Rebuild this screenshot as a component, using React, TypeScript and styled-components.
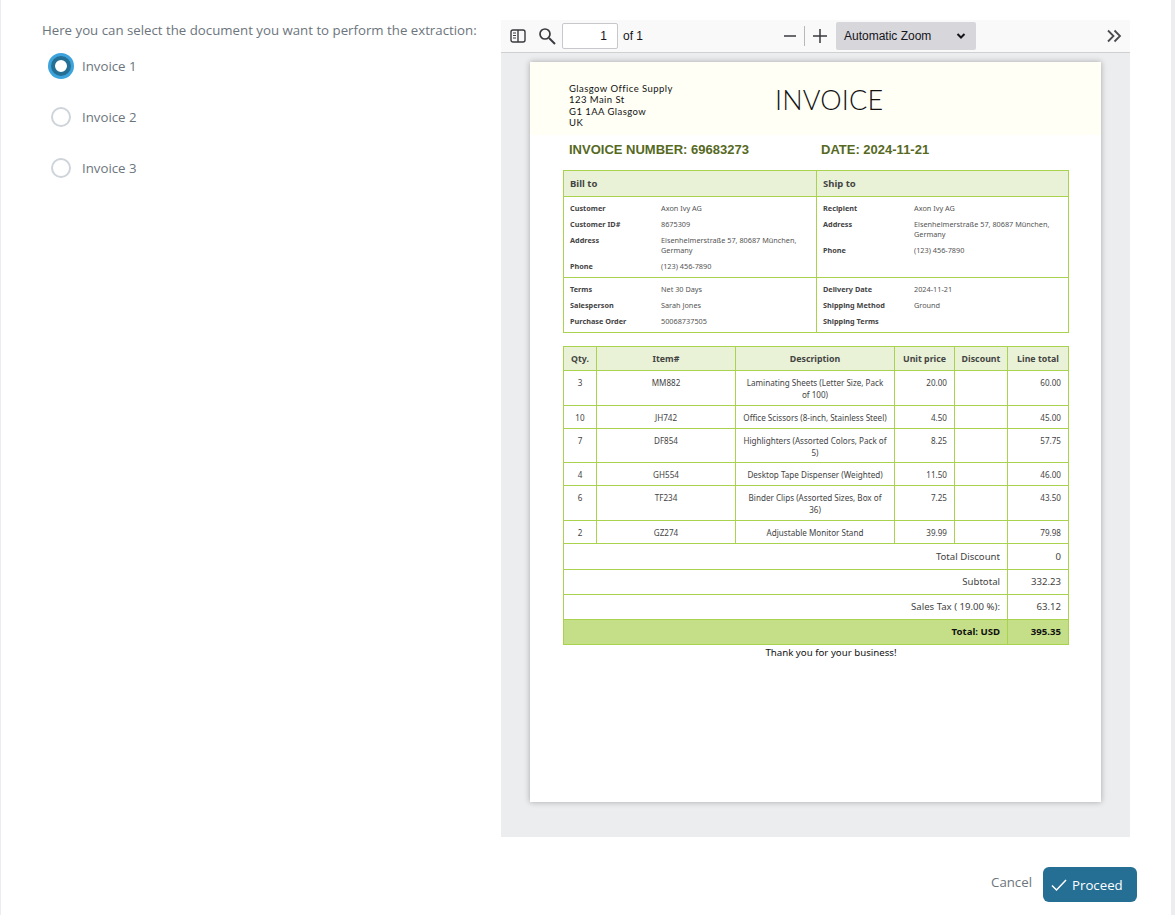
import React from "react";
import styled, { createGlobalStyle } from "styled-components";

const Global = createGlobalStyle`
  html, body { margin: 0; padding: 0; background: #fff; }
  body { font-family: "Open Sans", "Noto Sans", sans-serif; }
`;

const Shell = styled.div`
  width: 1175px;
  height: 915px;
  box-sizing: border-box;
  border-left: 1px solid #edecf0;
  border-right: 4px solid #edecf0;
  padding: 20px 34px 0 41px;
  overflow: hidden;
`;
const Main = styled.div`
  display: flex;
  align-items: flex-start;
`;
const LeftCol = styled.div`
  width: 459px;
  flex: none;
`;
const Prompt = styled.div`
  font-size: 13.25px;
  line-height: 20px;
  color: #6c757d;
  white-space: nowrap;
`;
const RadioList = styled.div`
  display: flex;
  flex-direction: column;
  gap: 25px;
  margin-top: 13px;
  padding-left: 6px;
`;
const RadioRow = styled.div`
  display: flex;
  align-items: center;
  gap: 8px;
  height: 26px;
`;
const RadioSlot = styled.span`
  width: 26px;
  height: 26px;
  display: flex;
  align-items: center;
  justify-content: center;
`;
const RadioOn = styled.span`
  width: 12px;
  height: 12px;
  box-sizing: content-box;
  border-radius: 50%;
  background: #fff;
  border: 4px solid #256f94;
  box-shadow: 0 0 0 3px #3ca3dc;
`;
const RadioOff = styled.span`
  width: 16px;
  height: 16px;
  border-radius: 50%;
  background: #fff;
  border: 2px solid #ced4da;
`;
const RadioLabel = styled.span`
  font-size: 13.25px;
  color: #6c757d;
`;

const Viewer = styled.div`
  width: 629px;
  height: 817px;
  flex: none;
  background: #ecedef;
  display: flex;
  flex-direction: column;
`;
const Toolbar = styled.div`
  height: 32px;
  flex: none;
  box-sizing: content-box;
  background: #f9f9fa;
  border-bottom: 1px solid #d0d0d3;
  display: flex;
  align-items: center;
  font-family: "Liberation Sans", Arial, sans-serif;
  font-size: 12px;
  color: #15141a;
`;
const ToolIcon = styled.svg`
  flex: none;
  display: block;
`;
const PageInput = styled.div`
  width: 56px;
  height: 26px;
  box-sizing: border-box;
  margin-left: 6px;
  background: #fff;
  border: 1px solid #c8c8cc;
  border-radius: 2px;
  text-align: right;
  padding-right: 10px;
  line-height: 24px;
`;
const OfPages = styled.span`
  margin-left: 5px;
  width: 160px;
`;
const Sep = styled.span`
  width: 1px;
  height: 20px;
  background: #b8b8bb;
  margin: 0 7px;
`;
const ZoomSelect = styled.div`
  width: 140px;
  height: 28px;
  margin-left: 8px;
  box-sizing: border-box;
  background: #d7d7db;
  border-radius: 2px;
  padding: 0 10px 0 8px;
  display: flex;
  align-items: center;
  justify-content: space-between;
`;
const Spacer = styled.span`
  flex: 1;
`;
const PageWrap = styled.div`
  flex: 1;
  padding: 9px 29px 35px;
`;
const Sheet = styled.div`
  width: 571px;
  height: 740px;
  background: #fff;
  box-shadow: 0 0 6px rgba(0, 0, 0, 0.3);
  color: #222;
`;
const SheetHead = styled.div`
  height: 73px;
  background: #fffff6;
  box-sizing: border-box;
  padding-top: 21px;
  padding-left: 39px;
  display: flex;
  font-family: "Lato", sans-serif;
  color: #111;
`;
const Address = styled.div`
  width: 206px;
  font-size: 9.5px;
  line-height: 11.4px;
  letter-spacing: 0.45px;
  white-space: nowrap;
`;
const Title = styled.div`
  font-size: 27px;
  line-height: 34px;
  font-weight: 300;
  letter-spacing: 0.2px;
`;
const MetaRow = styled.div`
  display: flex;
  padding-left: 39px;
  height: 35px;
  align-items: center;
  font-family: "Liberation Sans", Arial, sans-serif;
  font-weight: 700;
  font-size: 13px;
  color: #56691f;
  margin-top: -3px;
  margin-bottom: 3px;
`;
const MetaCell = styled.span`
  width: 252px;
`;
const Tables = styled.div`
  padding-left: 33px;
  font-family: "Noto Sans", sans-serif;
`;
const GridTable = styled.table<{ $w: number }>`
  width: ${(p) => p.$w}px;
  table-layout: fixed;
  border-collapse: collapse;
  border: 1px solid #bfdd82;
  font-size: 7.3px;
  line-height: 10px;
  color: #333;
  td, th { border: 1px solid #a9d24f; padding: 0; }
`;
const HeadCell = styled.th`
  background: #e9f2d6;
  text-align: left;
  padding: 0 6px !important;
  font-size: 9.5px;
  font-weight: 700;
  color: #444;
  height: 25px;
`;
const InfoCell = styled.td`
  vertical-align: top;
  padding: 6px 6px 0 6px !important;
`;
const InfoGrid = styled.div<{ $h: number }>`
  display: grid;
  grid-template-columns: 91px 1fr;
  row-gap: 6px;
  align-content: start;
  height: ${(p) => p.$h}px;
`;
const InfoKey = styled.div`
  font-weight: 700;
  color: #444;
`;
const InfoVal = styled.div`
  color: #555;
`;
const ItemsGap = styled.div`
  height: 13px;
`;
const ColHead = styled.th`
  background: #e9f2d6;
  text-align: center;
  font-size: 8.8px;
  font-weight: 700;
  color: #444;
  height: 23px;
`;
const ItemCell = styled.td<{ $align?: string; $h: number }>`
  vertical-align: top;
  height: ${(p) => p.$h}px;
  text-align: ${(p) => p.$align || "center"};
  padding: 6px 7px 0 !important;
  box-sizing: border-box;
  font-size: 8.1px;
  line-height: 12px;
  color: #444;
`;
const SumLabel = styled.td<{ $strong?: boolean; $h?: number }>`
  text-align: right;
  padding: 0 7px !important;
  font-size: 9.6px;
  height: ${(p) => p.$h ?? 24}px;
  color: ${(p) => (p.$strong ? "#111" : "#444")};
  font-weight: ${(p) => (p.$strong ? 700 : 400)};
  background: ${(p) => (p.$strong ? "#c4df87" : "#fff")};
`;
const Thanks = styled.div`
  width: 536px;
  text-align: center;
  font-size: 9.7px;
  line-height: 15px;
  color: #111;
`;
const Footer = styled.div`
  display: flex;
  justify-content: flex-end;
  align-items: center;
  margin-top: 30px;
  gap: 11px;
`;
const CancelLink = styled.span`
  font-size: 13.25px;
  color: #6c757d;
  position: relative;
  top: -3px;
`;
const ProceedBtn = styled.div`
  width: 94px;
  height: 35px;
  box-sizing: border-box;
  background: #256f94;
  border-radius: 6px;
  color: #fff;
  font-size: 13.25px;
  display: flex;
  align-items: center;
  padding-left: 8px;
  gap: 5px;
`;

const Row = ({ k, v }: { k: string; v?: string }) => (
  <>
    <InfoKey>{k}</InfoKey>
    <InfoVal>{v}</InfoVal>
  </>
);

const items = [
  ["3", "MM882", "Laminating Sheets (Letter Size, Pack of 100)", "20.00", "60.00", 35],
  ["10", "JH742", "Office Scissors (8-inch, Stainless Steel)", "4.50", "45.00", 23],
  ["7", "DF854", "Highlighters (Assorted Colors, Pack of 5)", "8.25", "57.75", 34],
  ["4", "GH554", "Desktop Tape Dispenser (Weighted)", "11.50", "46.00", 23],
  ["6", "TF234", "Binder Clips (Assorted Sizes, Box of 36)", "7.25", "43.50", 35],
  ["2", "GZ274", "Adjustable Monitor Stand", "39.99", "79.98", 23],
] as const;

const sums = [
  ["Total Discount", "0", 25],
  ["Subtotal", "332.23", 24],
  ["Sales Tax ( 19.00 %):", "63.12", 24],
] as const;

export default function App() {
  return (
    <Shell>
      <Global />
      <Main>
        <LeftCol>
          <Prompt>Here you can select the document you want to perform the extraction:</Prompt>
          <RadioList>
            <RadioRow>
              <RadioSlot><RadioOn /></RadioSlot>
              <RadioLabel>Invoice 1</RadioLabel>
            </RadioRow>
            <RadioRow>
              <RadioSlot><RadioOff /></RadioSlot>
              <RadioLabel>Invoice 2</RadioLabel>
            </RadioRow>
            <RadioRow>
              <RadioSlot><RadioOff /></RadioSlot>
              <RadioLabel>Invoice 3</RadioLabel>
            </RadioRow>
          </RadioList>
        </LeftCol>
        <Viewer>
          <Toolbar>
            <ToolIcon width="16" height="16" viewBox="0 0 16 16" fill="none" stroke="#3a3a3f" strokeWidth="1.4" style={{ marginLeft: 9 }}>
              <rect x="1" y="2" width="14" height="12" rx="2" />
              <path d="M8 2v12" />
              <path d="M3 5h3M3 7.500h3M3 10h3" strokeWidth="1" />
            </ToolIcon>
            <ToolIcon width="18" height="18" viewBox="0 0 18 18" fill="none" stroke="#3a3a3f" strokeWidth="1.7" style={{ marginLeft: 12 }}>
              <circle cx="7" cy="7" r="5" />
              <path d="M11 11l6 6" strokeWidth="2" />
            </ToolIcon>
            <PageInput>1</PageInput>
            <OfPages>of 1</OfPages>
            <ToolIcon width="14" height="14" viewBox="0 0 14 14" stroke="#3a3a3f" strokeWidth="1.5">
              <path d="M1 7h12" />
            </ToolIcon>
            <Sep />
            <ToolIcon width="16" height="16" viewBox="0 0 16 16" stroke="#3a3a3f" strokeWidth="1.5">
              <path d="M1 8h14M8 1v14" />
            </ToolIcon>
            <ZoomSelect>
              <span>Automatic Zoom</span>
              <ToolIcon width="10" height="8" viewBox="0 0 10 8" fill="none" stroke="#15141a" strokeWidth="2">
                <path d="M1.500 2l3.500 3.500L8.500 2" />
              </ToolIcon>
            </ZoomSelect>
            <Spacer />
            <ToolIcon width="16" height="14" viewBox="0 0 16 14" fill="none" stroke="#4a4a4f" strokeWidth="1.8" style={{ marginRight: 8 }}>
              <path d="M2 1.500L7.500 7 2 12.500M8.500 1.500L14 7l-5.500 5.500" />
            </ToolIcon>
          </Toolbar>
          <PageWrap>
            <Sheet>
              <SheetHead>
                <Address>
                  Glasgow Office Supply<br />123 Main St<br />G1 1AA Glasgow<br />UK
                </Address>
                <Title>INVOICE</Title>
              </SheetHead>
              <MetaRow>
                <MetaCell>INVOICE NUMBER: 69683273</MetaCell>
                <span>DATE: 2024-11-21</span>
              </MetaRow>
              <Tables>
                <GridTable $w={506}>
                  <colgroup>
                    <col style={{ width: 253 }} />
                    <col />
                  </colgroup>
                  <tbody>
                    <tr>
                      <HeadCell>Bill to</HeadCell>
                      <HeadCell>Ship to</HeadCell>
                    </tr>
                    <tr>
                      <InfoCell>
                        <InfoGrid $h={74}>
                          <Row k="Customer" v="Axon Ivy AG" />
                          <Row k="Customer ID#" v="8675309" />
                          <Row k="Address" v="Eisenhelmerstraße 57, 80687 München, Germany" />
                          <Row k="Phone" v="(123) 456-7890" />
                        </InfoGrid>
                      </InfoCell>
                      <InfoCell>
                        <InfoGrid $h={74}>
                          <Row k="Recipient" v="Axon Ivy AG" />
                          <Row k="Address" v="Eisenhelmerstraße 57, 80687 München, Germany" />
                          <Row k="Phone" v="(123) 456-7890" />
                        </InfoGrid>
                      </InfoCell>
                    </tr>
                    <tr>
                      <InfoCell>
                        <InfoGrid $h={48}>
                          <Row k="Terms" v="Net 30 Days" />
                          <Row k="Salesperson" v="Sarah Jones" />
                          <Row k="Purchase Order" v="50068737505" />
                        </InfoGrid>
                      </InfoCell>
                      <InfoCell>
                        <InfoGrid $h={48}>
                          <Row k="Delivery Date" v="2024-11-21" />
                          <Row k="Shipping Method" v="Ground" />
                          <Row k="Shipping Terms" />
                        </InfoGrid>
                      </InfoCell>
                    </tr>
                  </tbody>
                </GridTable>
                <ItemsGap />
                <GridTable $w={505}>
                  <colgroup>
                    <col style={{ width: 33 }} />
                    <col style={{ width: 139 }} />
                    <col style={{ width: 159 }} />
                    <col style={{ width: 60 }} />
                    <col style={{ width: 53 }} />
                    <col style={{ width: 61 }} />
                  </colgroup>
                  <tbody>
                    <tr>
                      <ColHead>Qty.</ColHead>
                      <ColHead>Item#</ColHead>
                      <ColHead>Description</ColHead>
                      <ColHead>Unit price</ColHead>
                      <ColHead>Discount</ColHead>
                      <ColHead>Line total</ColHead>
                    </tr>
                    {items.map((it) => (
                      <tr key={it[1]}>
                        <ItemCell $h={it[5]}>{it[0]}</ItemCell>
                        <ItemCell $h={it[5]}>{it[1]}</ItemCell>
                        <ItemCell $h={it[5]}>{it[2]}</ItemCell>
                        <ItemCell $h={it[5]} $align="right">{it[3]}</ItemCell>
                        <ItemCell $h={it[5]} />
                        <ItemCell $h={it[5]} $align="right">{it[4]}</ItemCell>
                      </tr>
                    ))}
                    {sums.map(([a, b, h]) => (
                      <tr key={a}>
                        <SumLabel $h={h} colSpan={5}>{a}</SumLabel>
                        <SumLabel $h={h}>{b}</SumLabel>
                      </tr>
                    ))}
                    <tr>
                      <SumLabel $strong colSpan={5}>Total: USD</SumLabel>
                      <SumLabel $strong>395.35</SumLabel>
                    </tr>
                  </tbody>
                </GridTable>
                <Thanks>Thank you for your business!</Thanks>
              </Tables>
            </Sheet>
          </PageWrap>
        </Viewer>
      </Main>
      <Footer>
        <CancelLink>Cancel</CancelLink>
        <ProceedBtn>
          <svg width="16" height="14" viewBox="0 0 16 14" fill="none" stroke="#fff" strokeWidth="1.500">
            <path d="M1 7.500l4.500 4.500L15 2" />
          </svg>
          Proceed
        </ProceedBtn>
      </Footer>
    </Shell>
  );
}
